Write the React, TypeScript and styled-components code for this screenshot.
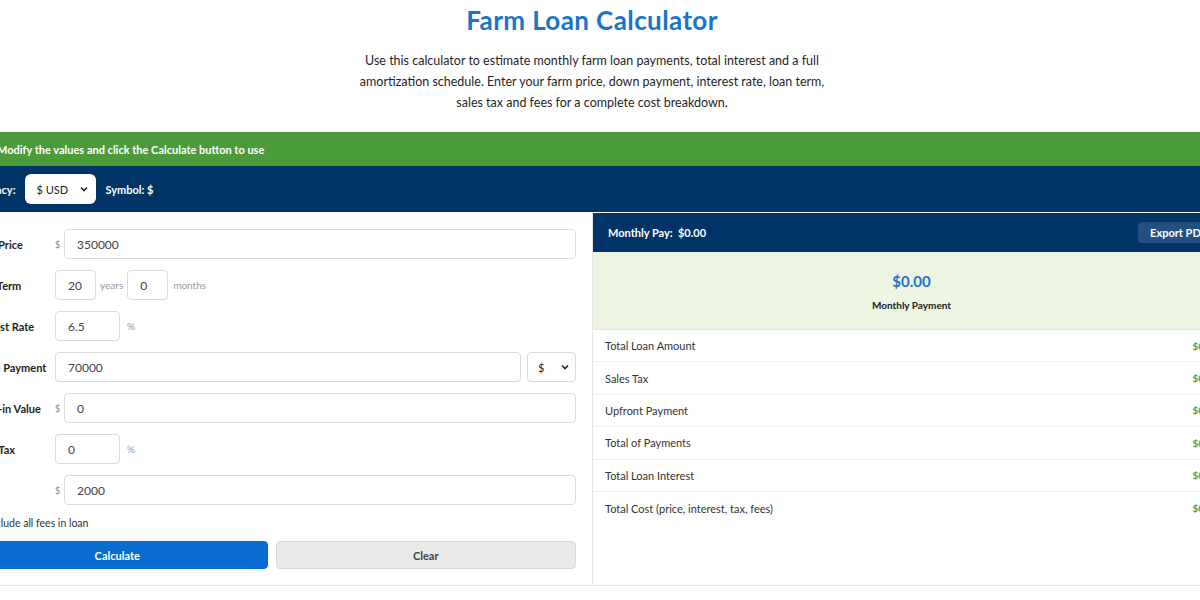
import styled, { createGlobalStyle } from "styled-components";

const GlobalStyle = createGlobalStyle`
  body {
    margin: 0;
    font-family: Lato, "Noto Sans", sans-serif;
    color: #222;
    background: #fff;
    overflow-x: hidden;
  }
`;

const results = [
  "Total Loan Amount",
  "Sales Tax",
  "Upfront Payment",
  "Total of Payments",
  "Total Loan Interest",
  "Total Cost (price, interest, tax, fees)",
];

const Page = styled.div`
  width: 1184px;
`;

const Title = styled.h1`
  margin: 0;
  padding-top: 5px;
  text-align: center;
  font-size: 26px;
  font-weight: 700;
  line-height: 30px;
  color: #1b74c8;
  letter-spacing: 0.4px;
`;

const Intro = styled.p`
  width: 480px;
  margin: 15px auto 0;
  text-align: center;
  font-size: 12.5px;
  line-height: 21px;
  color: #1f1f1f;
`;

const Calculator = styled.section`
  margin: 19px -46px 0;
  border-bottom: 1px solid #e6e6e6;
`;

const Banner = styled.div`
  height: 34px;
  display: flex;
  align-items: center;
  padding-left: 43px;
  background: #4c9b3b;
  color: #fff;
  font-size: 11px;
  font-weight: 700;
`;

const Toolbar = styled.div`
  height: 46px;
  display: flex;
  align-items: center;
  gap: 9px;
  padding-left: 14px;
  background: #003366;
  color: #fff;
  font-size: 11px;
  font-weight: 700;
`;

const ToolbarSelect = styled.div`
  width: 71px;
  height: 30px;
  box-sizing: border-box;
  display: flex;
  align-items: center;
  justify-content: space-between;
  padding: 0 8px 0 11px;
  margin-left: 1px;
  background: #fff;
  border-radius: 6px;
  color: #222;
  font-weight: 400;
  font-size: 11px;
`;

const Body = styled.div`
  display: grid;
  grid-template-columns: 638px 638px;
`;

const Form = styled.div`
  padding: 17px 16px 16px 13px;
  display: flex;
  flex-direction: column;
`;

const Row = styled.div`
  display: grid;
  grid-template-columns: 88px 1fr;
  align-items: center;
  height: 30px;
  margin-bottom: 11px;
`;

const Label = styled.label`
  padding-left: 4px;
  font-size: 11px;
  font-weight: 700;
  color: #222;
`;

const Field = styled.div`
  display: flex;
  align-items: center;
  gap: 4px;
  height: 30px;
`;

const Prefix = styled.span`
  width: 5px;
  font-size: 9px;
  color: #888;
`;

const Input = styled.div<{ $width?: number }>`
  ${({ $width }) => ($width ? `width: ${$width}px;` : "flex: 1;")}
  height: 30px;
  box-sizing: border-box;
  display: flex;
  align-items: center;
  padding-left: 12px;
  border: 1px solid #dcdcdc;
  border-radius: 4px;
  background: #fff;
  font-size: 12px;
  color: #444;
`;

const Unit = styled.span<{ $gap?: number }>`
  font-size: 10px;
  color: #999;
  margin-left: ${({ $gap }) => $gap ?? 0}px;
`;

const SmallSelect = styled(Input)`
  flex: none;
  width: 49px;
  margin-left: 2px;
  padding: 0 6px 0 10px;
  justify-content: space-between;
  color: #222;
  font-size: 11px;
`;

const CheckRow = styled.label`
  display: flex;
  align-items: center;
  gap: 3px;
  padding-left: 4px;
  font-size: 10.5px;
  color: #333;
`;

const Check = styled.span`
  width: 11px;
  height: 11px;
  border: 1px solid #888;
  border-radius: 2px;
  background: #fff;
`;

const Buttons = styled.div`
  display: grid;
  grid-template-columns: 1fr 1fr;
  gap: 8px;
  margin-top: 12px;
`;

const Button = styled.button<{ $primary?: boolean }>`
  height: 28px;
  border-radius: 4px;
  font-family: inherit;
  font-size: 11px;
  font-weight: 700;
  border: 1px solid ${({ $primary }) => ($primary ? "#0a6bd1" : "#dadada")};
  background: ${({ $primary }) => ($primary ? "#0a6bd1" : "#e9e9e9")};
  color: ${({ $primary }) => ($primary ? "#fff" : "#444")};
`;

const Results = styled.div`
  border-left: 1px solid #e6e6e6;
  padding-top: 1px;
`;

const ResultsHeader = styled.div`
  height: 39px;
  display: flex;
  align-items: center;
  justify-content: space-between;
  padding: 0 11px 0 15px;
  background: #003366;
  color: #fff;
  font-size: 11px;
  font-weight: 700;
`;

const Export = styled.button`
  height: 21px;
  padding: 0 12px;
  border: none;
  border-radius: 4px;
  background: #22507f;
  color: #fff;
  font-family: inherit;
  font-size: 11px;
  font-weight: 700;
`;

const Summary = styled.div`
  height: 78px;
  display: flex;
  flex-direction: column;
  align-items: center;
  justify-content: center;
  gap: 9px;
  padding-top: 2px;
  box-sizing: border-box;
  background: #edf4e2;
  border-bottom: 1px solid #e4ead9;
`;

const Amount = styled.div`
  font-size: 15px;
  font-weight: 700;
  color: #1b74c8;
`;

const AmountLabel = styled.div`
  font-size: 10px;
  font-weight: 700;
  color: #222;
`;

const ResultRow = styled.div`
  height: 32.4px;
  box-sizing: border-box;
  display: flex;
  align-items: center;
  justify-content: space-between;
  padding: 0 12px;
  border-bottom: 1px solid #efefef;
  font-size: 11px;
  color: #333;
  &:last-child {
    border-bottom: none;
  }
`;

const Value = styled.span`
  font-weight: 700;
  font-size: 10px;
  color: #5b9a4b;
`;

function Chevron() {
  return (
    <svg width="8" height="6" viewBox="0 0 8 6">
      <path d="M1 1.5 L4 4.5 L7 1.5" stroke="#222" strokeWidth="1.6" fill="none" />
    </svg>
  );
}

export default function App() {
  return (
    <Page>
      <GlobalStyle />
      <Title>Farm Loan Calculator</Title>
      <Intro>
        Use this calculator to estimate monthly farm loan payments, total interest and a full
        amortization schedule. Enter your farm price, down payment, interest rate, loan term,
        sales tax and fees for a complete cost breakdown.
      </Intro>

      <Calculator>
        <Banner>Modify the values and click the Calculate button to use</Banner>
        <Toolbar>
          <span>Currency:</span>
          <ToolbarSelect>
            $ USD <Chevron />
          </ToolbarSelect>
          <span>Symbol: $</span>
        </Toolbar>

        <Body>
          <Form>
            <Row>
              <Label>Farm Price</Label>
              <Field>
                <Prefix>$</Prefix>
                <Input>350000</Input>
              </Field>
            </Row>
            <Row>
              <Label>Loan Term</Label>
              <Field>
                <Input $width={41}>20</Input>
                <Unit>years</Unit>
                <Input $width={41}>0</Input>
                <Unit $gap={1}>months</Unit>
              </Field>
            </Row>
            <Row>
              <Label>Interest Rate</Label>
              <Field>
                <Input $width={65}>6.5</Input>
                <Unit $gap={3}>%</Unit>
              </Field>
            </Row>
            <Row>
              <Label>Down Payment</Label>
              <Field>
                <Input>70000</Input>
                <SmallSelect>
                  $ <Chevron />
                </SmallSelect>
              </Field>
            </Row>
            <Row>
              <Label>Trade-in Value</Label>
              <Field>
                <Prefix>$</Prefix>
                <Input>0</Input>
              </Field>
            </Row>
            <Row>
              <Label>Sales Tax</Label>
              <Field>
                <Input $width={65}>0</Input>
                <Unit $gap={3}>%</Unit>
              </Field>
            </Row>
            <Row>
              <Label>Fees</Label>
              <Field>
                <Prefix>$</Prefix>
                <Input>2000</Input>
              </Field>
            </Row>
            <CheckRow>
              <Check />
              Include all fees in loan
            </CheckRow>
            <Buttons>
              <Button $primary>Calculate</Button>
              <Button>Clear</Button>
            </Buttons>
          </Form>

          <Results>
            <ResultsHeader>
              <span>Monthly Pay:&nbsp; $0.00</span>
              <Export>Export PDF</Export>
            </ResultsHeader>
            <Summary>
              <Amount>$0.00</Amount>
              <AmountLabel>Monthly Payment</AmountLabel>
            </Summary>
            {results.map((label) => (
              <ResultRow key={label}>
                <span>{label}</span>
                <Value>$0.00</Value>
              </ResultRow>
            ))}
          </Results>
        </Body>
      </Calculator>
    </Page>
  );
}
